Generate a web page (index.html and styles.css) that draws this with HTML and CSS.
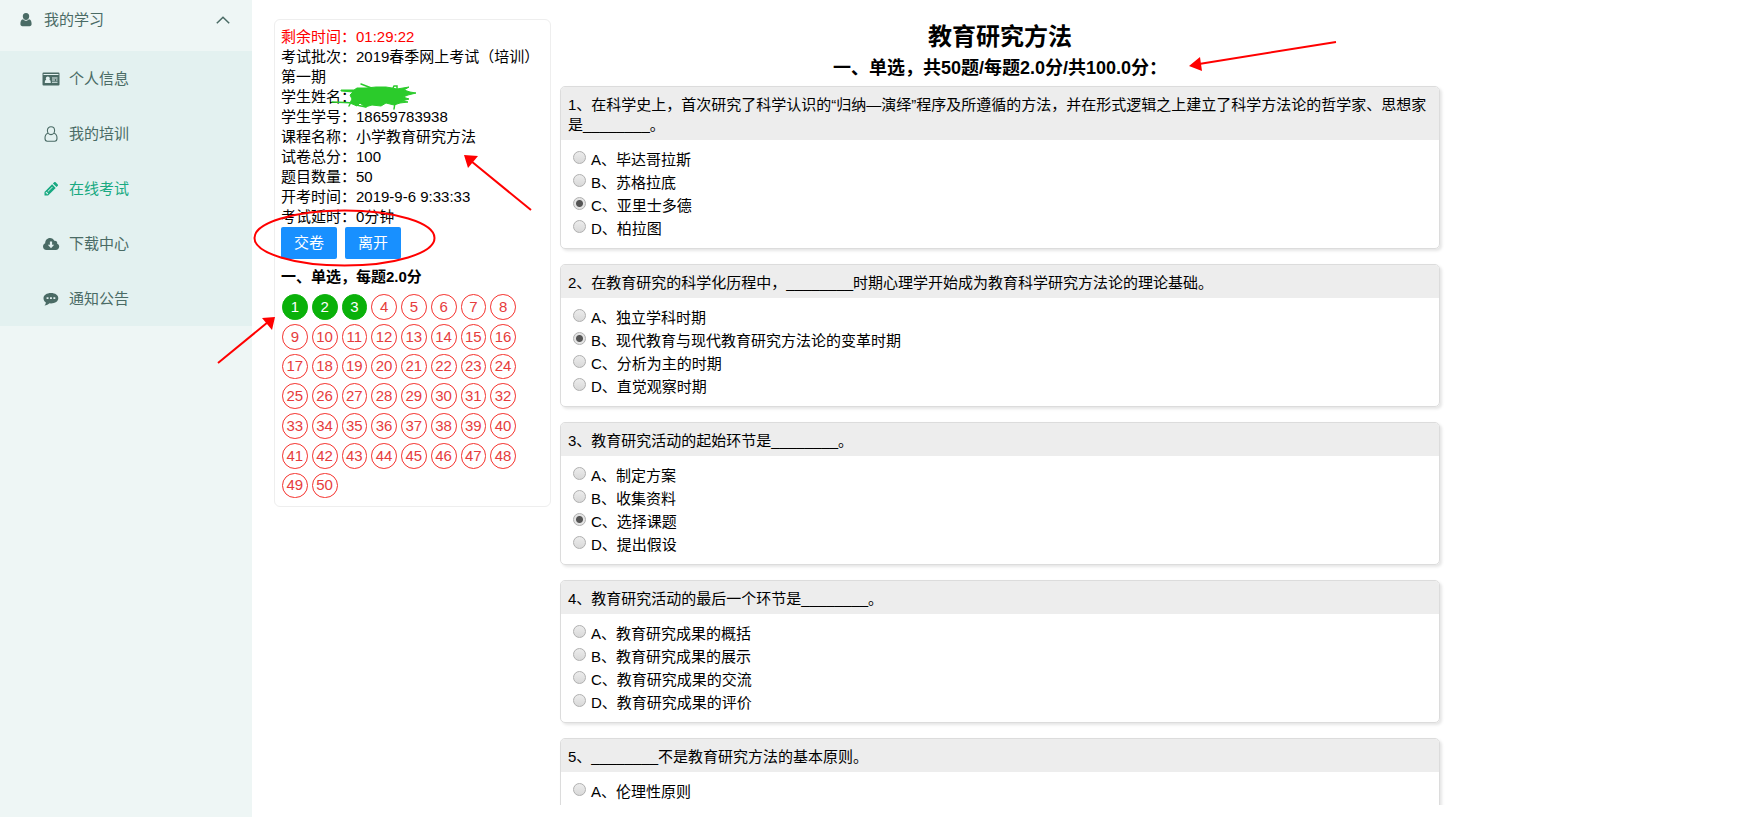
FILE: index.html
```html
<!DOCTYPE html>
<html lang="zh-CN">
<head>
<meta charset="utf-8">
<title>教育研究方法</title>
<link rel="stylesheet" href="styles.css">
</head>
<body>
<div class="app">
  <nav class="sidebar">
    <button class="menu-head" type="button">
      <svg viewBox="0 0 12 14" width="12" height="14"><path fill="currentColor" d="M6 0a3.3 3.3 0 0 1 3.2 3.4c0 1.9-1.4 3.6-3.2 3.6S2.800 5.300 2.800 3.400A3.300 3.300 0 0 1 6 0zM3 6.300C3.800 7.200 4.800 7.800 6 7.800s2.200-.6 3-1.500c1.900.3 2.600 2.300 2.600 4.700 0 1.300-.8 2.200-2 2.200H2.400c-1.200 0-2-.9-2-2.200C.4 8.600 1.100 6.600 3 6.300z"/></svg>
      <span class="menu-title">我的学习</span>
      <svg viewBox="0 0 14 8" width="14" height="8"><path fill="none" stroke="currentColor" stroke-width="1.500" d="M.8 7.200 7 1.200l6.200 6"/></svg>
    </button>
    <ul class="submenu">
      <li><a class="menu-item" href="#"><svg viewBox="0 0 18 16" width="18" height="16"><path fill="currentColor" fill-rule="evenodd" d="M1.500 1.500h15a1 1 0 0 1 1 1v11a1 1 0 0 1-1 1h-15a1 1 0 0 1-1-1v-11a1 1 0 0 1 1-1zM1.500 3v1h15V3zM2.800 12h6c0-2-.6-3.200-1.500-3.200.4-.4.500-.8.500-1.300a2 2 0 0 0-4 0c0 .5.100.9.500 1.300-.9 0-1.500 1.200-1.500 3.200zM10 6.500v1h5.500v-1zM10 8.500v1h3v-1zM14 8.500v1h1.500v-1zM10 10.700v1h5.500v-1z"/></svg>个人信息</a></li>
      <li><a class="menu-item" href="#"><svg viewBox="0 0 18 16" width="18" height="16"><g fill="none" stroke="currentColor" stroke-width="1.100"><path d="M9 .8c2.200 0 3.600 1.600 3.600 3.700S11.200 8.600 9 8.600 5.400 6.600 5.400 4.500 6.800.8 9 .8z"/><path d="M5.900 7.200c-2 .6-2.900 2.500-2.900 5 0 1.800.8 3 2.300 3h7.400c1.500 0 2.300-1.200 2.300-3 0-2.500-.9-4.400-2.900-5"/></g></svg>我的培训</a></li>
      <li><a class="menu-item is-active" href="#"><svg viewBox="0 0 18 16" width="18" height="16"><path fill="currentColor" fill-rule="evenodd" d="M2.500 14.500v-3.600l7.600-7.600 3.600 3.600-7.600 7.600zM3.700 11.500v.8h1v1h.9l.7-.7-1.900-1.900zM5.600 10.300l.5.500 4.600-4.600-.5-.5zM10.900 2.500l1.300-1.300c.4-.4 1-.4 1.400 0l2.200 2.200c.4.4.4 1 0 1.400l-1.300 1.300z"/></svg>在线考试</a></li>
      <li><a class="menu-item" href="#"><svg viewBox="0 0 18 16" width="18" height="16"><path fill="currentColor" fill-rule="evenodd" d="M4.500 14A3.700 3.700 0 0 1 1 10.500c0-1.500.9-2.700 2.200-3.200C3.100 4.300 5.200 2 8 2c2 0 3.600 1.100 4.300 2.800 1.700-.4 3.300.9 2.900 2.900 1.200.4 2 1.500 2 2.900 0 1.900-1.500 3.400-3.400 3.400zM7.900 5.500v3.300H5.800L9 12.300l3.200-3.500h-2.100V5.500z"/></svg>下载中心</a></li>
      <li><a class="menu-item" href="#"><svg viewBox="0 0 18 16" width="18" height="16"><path fill="currentColor" fill-rule="evenodd" d="M9 2c4.200 0 7.300 2.200 7.300 5.200S13.200 12.400 9 12.400l-1.500-.1C6.300 13.500 4.600 14.400 2.500 14.500c.8-.7 1.300-1.700 1.400-3C2.400 10.500 1.500 9 1.500 7.200 1.500 4.200 4.800 2 9 2zM4.600 6.300v1.800h1.900V6.300zM8 6.300v1.800h1.900V6.300zM11.400 6.300v1.800h1.900V6.300z"/></svg>通知公告</a></li>
    </ul>
  </nav>

  <main class="exam">
    <aside class="panel">
      <ul class="info">
        <li class="time-left">剩余时间：01:29:22</li>
        <li>考试批次：2019春季网上考试（培训）第一期</li>
        <li>学生姓名：</li>
        <li>学生学号：18659783938</li>
        <li>课程名称：小学教育研究方法</li>
        <li>试卷总分：100</li>
        <li>题目数量：50</li>
        <li>开考时间：2019-9-6 9:33:33</li>
        <li>考试延时：0分钟</li>
      </ul>
      <div class="actions">
        <button class="btn" type="button">交卷</button>
        <button class="btn" type="button">离开</button>
      </div>
      <h2 class="panel-title">一、单选，每题2.0分</h2>
      <div class="numbers">
        <a class="num done" href="#q1">1</a><a class="num done" href="#q2">2</a><a class="num done" href="#q3">3</a><a class="num" href="#q4">4</a><a class="num" href="#q5">5</a><a class="num" href="#q6">6</a><a class="num" href="#q7">7</a><a class="num" href="#q8">8</a>
        <a class="num" href="#q9">9</a><a class="num" href="#q10">10</a><a class="num" href="#q11">11</a><a class="num" href="#q12">12</a><a class="num" href="#q13">13</a><a class="num" href="#q14">14</a><a class="num" href="#q15">15</a><a class="num" href="#q16">16</a>
        <a class="num" href="#q17">17</a><a class="num" href="#q18">18</a><a class="num" href="#q19">19</a><a class="num" href="#q20">20</a><a class="num" href="#q21">21</a><a class="num" href="#q22">22</a><a class="num" href="#q23">23</a><a class="num" href="#q24">24</a>
        <a class="num" href="#q25">25</a><a class="num" href="#q26">26</a><a class="num" href="#q27">27</a><a class="num" href="#q28">28</a><a class="num" href="#q29">29</a><a class="num" href="#q30">30</a><a class="num" href="#q31">31</a><a class="num" href="#q32">32</a>
        <a class="num" href="#q33">33</a><a class="num" href="#q34">34</a><a class="num" href="#q35">35</a><a class="num" href="#q36">36</a><a class="num" href="#q37">37</a><a class="num" href="#q38">38</a><a class="num" href="#q39">39</a><a class="num" href="#q40">40</a>
        <a class="num" href="#q41">41</a><a class="num" href="#q42">42</a><a class="num" href="#q43">43</a><a class="num" href="#q44">44</a><a class="num" href="#q45">45</a><a class="num" href="#q46">46</a><a class="num" href="#q47">47</a><a class="num" href="#q48">48</a>
        <a class="num" href="#q49">49</a><a class="num" href="#q50">50</a>
      </div>
    </aside>

    <section class="paper">
      <h1 class="paper-title">教育研究方法</h1>
      <h2 class="paper-subtitle">一、单选，共50题/每题2.0分/共100.0分：</h2>

      <article class="card" id="q1">
        <h3 class="question">1、在科学史上，首次研究了科学认识的“归纳—演绎”程序及所遵循的方法，并在形式逻辑之上建立了科学方法论的哲学家、思想家是________。</h3>
        <div class="options">
          <label class="option"><input type="radio" name="q1">A、毕达哥拉斯</label>
          <label class="option"><input type="radio" name="q1">B、苏格拉底</label>
          <label class="option"><input type="radio" name="q1" checked>C、亚里士多德</label>
          <label class="option"><input type="radio" name="q1">D、柏拉图</label>
        </div>
      </article>

      <article class="card" id="q2">
        <h3 class="question">2、在教育研究的科学化历程中，________时期心理学开始成为教育科学研究方法论的理论基础。</h3>
        <div class="options">
          <label class="option"><input type="radio" name="q2">A、独立学科时期</label>
          <label class="option"><input type="radio" name="q2" checked>B、现代教育与现代教育研究方法论的变革时期</label>
          <label class="option"><input type="radio" name="q2">C、分析为主的时期</label>
          <label class="option"><input type="radio" name="q2">D、直觉观察时期</label>
        </div>
      </article>

      <article class="card" id="q3">
        <h3 class="question">3、教育研究活动的起始环节是________。</h3>
        <div class="options">
          <label class="option"><input type="radio" name="q3">A、制定方案</label>
          <label class="option"><input type="radio" name="q3">B、收集资料</label>
          <label class="option"><input type="radio" name="q3" checked>C、选择课题</label>
          <label class="option"><input type="radio" name="q3">D、提出假设</label>
        </div>
      </article>

      <article class="card" id="q4">
        <h3 class="question">4、教育研究活动的最后一个环节是________。</h3>
        <div class="options">
          <label class="option"><input type="radio" name="q4">A、教育研究成果的概括</label>
          <label class="option"><input type="radio" name="q4">B、教育研究成果的展示</label>
          <label class="option"><input type="radio" name="q4">C、教育研究成果的交流</label>
          <label class="option"><input type="radio" name="q4">D、教育研究成果的评价</label>
        </div>
      </article>

      <article class="card" id="q5">
        <h3 class="question">5、________不是教育研究方法的基本原则。</h3>
        <div class="options">
          <label class="option"><input type="radio" name="q5">A、伦理性原则</label>
        </div>
      </article>
    </section>
  </main>

  <svg class="marks" width="1744" height="817" viewBox="0 0 1744 817" aria-hidden="true">
    <path fill="#2bcb2b" stroke="#2bcb2b" stroke-linejoin="round" d="M341 90 354 90 357 88 366 88 376 87 386 87 392 88 397 89 409 87 404 90 410 92 416 93 408 95 403 97 409 99 402 101 408 102 400 103 394 105 386 103 381 106 372 105 365 107 360 103 357 106 350 103 352 99 350 95 353 92 341 91z"/>
    <g fill="none" stroke="#2bcb2b" stroke-width="1.500" stroke-linecap="round">
      <path d="M332 102 356 103M361 84 374 89M395 103 394 109M393 88 394 86 397 86 397 89M350 104 349 106M356 105 366 107"/>
    </g>
    <g fill="none" stroke="#f00" stroke-width="2">
      <ellipse cx="344.500" cy="238" rx="90" ry="27.500"/>
      <path d="M1336 42 1199 64M531 210 471 161M218 363 268 322"/>
    </g>
    <path fill="#f00" d="M1189 66 1200 57 1202 71zM464 155 478 156 468 168zM275 317 262 318 272 330z"/>
  </svg>
</div>
</body>
</html>
```

FILE: styles.css
```css
* {
  box-sizing: border-box;
}

body {
  margin: 0;
  background: #fff;
  color: #000;
  font: 15px/20px "Liberation Sans", "Noto Sans CJK SC", sans-serif;
}

ul {
  margin: 0;
  padding: 0;
  list-style: none;
}

.app {
  position: relative;
  display: flex;
  height: 100vh;
  overflow: hidden;
}

/* Side menu */
.sidebar {
  flex: 0 0 252px;
  background: #eef6f5;
  color: #4a6b65;
}

.menu-head {
  display: flex;
  align-items: center;
  width: 100%;
  padding: 10px 22px 21px 20px;
  border: 0;
  background: none;
  color: inherit;
  font: inherit;
  text-align: left;
}

.menu-title {
  flex: 1;
  padding-left: 12px;
}

.submenu {
  background: #e3f1f0;
}

.menu-item {
  display: flex;
  align-items: center;
  gap: 9px;
  height: 55px;
  padding-left: 42px;
  color: inherit;
  text-decoration: none;
}

.menu-item.is-active {
  color: #17a981;
}

/* Exam area */
.exam {
  flex: 1;
  display: flex;
  align-items: flex-start;
  gap: 6px;
  margin-bottom: 12px;
  padding: 19px 0 0 22px;
  overflow: hidden;
}

.panel {
  flex: 0 0 277px;
  padding: 7px 6px 8px;
  border: 1px solid #eee;
  border-radius: 6px;
}

.time-left {
  color: #f00;
}

.actions {
  display: flex;
  gap: 8px;
}

.btn {
  padding: 6px 13px;
  border: 0;
  border-radius: 2px;
  background: #1890ff;
  color: #fff;
  font: inherit;
}

.panel-title {
  margin: 8px 0 7px;
  font-size: 15px;
  line-height: 20px;
}

.numbers {
  display: grid;
  grid-template-columns: repeat(8, 1fr);
  gap: 4px;
  width: 234px;
  margin-left: 1px;
}

.num {
  display: flex;
  align-items: center;
  justify-content: center;
  aspect-ratio: 1;
  border: 1px solid #f5322d;
  border-radius: 50%;
  color: #e63c3c;
  text-decoration: none;
}

.num.done {
  border-color: #0ab10a;
  background: #0ab10a;
  color: #fff;
}

/* Question list */
.paper {
  flex: 0 1 888px;
  padding: 0 5px 0 3px;
}

.paper-title {
  margin: 0;
  font-size: 24px;
  line-height: 35px;
  text-align: center;
}

.paper-subtitle {
  margin: 0 0 3px;
  font-size: 18px;
  line-height: 29px;
  text-align: center;
}

.card {
  margin-bottom: 15px;
  border: 1px solid #dcdcdc;
  border-radius: 5px;
  box-shadow: 2px 2px 3px rgba(0, 0, 0, 0.1);
  overflow: hidden;
}

.question {
  margin: 0;
  padding: 8px 7px 5px;
  background: #ededed;
  font-size: 15px;
  font-weight: 400;
}

.options {
  padding: 8px 12px;
}

.option {
  display: flex;
  align-items: flex-start;
  gap: 5px;
  line-height: 23px;
}

.option input {
  appearance: none;
  width: 13px;
  height: 13px;
  margin: 3px 0 0;
  border: 1px solid #b0b0b0;
  border-radius: 50%;
  background: linear-gradient(#ececec, #d9d9d9);
}

.option input:checked {
  background: radial-gradient(circle, #555 3px, #e4e4e4 4px);
}

/* Hand-drawn annotations over the page */
.marks {
  position: absolute;
  top: 0;
  left: 0;
  pointer-events: none;
}
```
